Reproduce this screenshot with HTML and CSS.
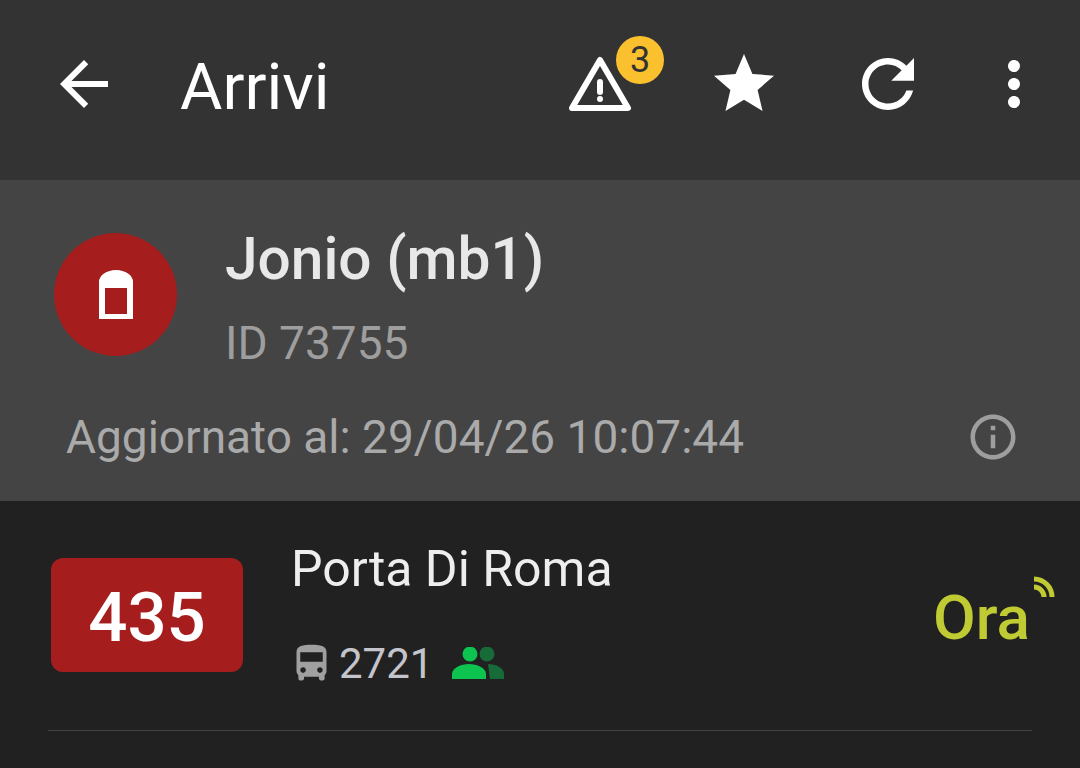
FILE: index.html
```html
<!DOCTYPE html>
<html lang="it">
<head>
<meta charset="UTF-8">
<meta name="viewport" content="width=device-width, initial-scale=1.0">
<title>Arrivi</title>
<link rel="stylesheet" href="styles.css">
</head>
<body>

<div class="toolbar">
  <div class="back-btn">
    <svg width="72" height="72" viewBox="0 0 24 24" fill="#fff"><path d="M20 11H7.83l5.59-5.59L12 4l-8 8 8 8 1.41-1.41L7.83 13H20v-2z"/></svg>
  </div>
  <div class="title">Arrivi</div>
  <div class="actions">
    <div class="action warn">
      <svg width="72" height="72" viewBox="0 0 72 72"><path d="M36 12L64 60H8Z" fill="none" stroke="#fff" stroke-width="6" stroke-linejoin="round"/><path d="M36 34V44" stroke="#fff" stroke-width="6" stroke-linecap="round"/><circle cx="36" cy="51" r="3" fill="#fff"/></svg>
      <span class="badge">3</span>
    </div>
    <div class="action">
      <svg width="72" height="72" viewBox="0 0 24 24" fill="#fff"><path d="M12 17.27L18.18 21l-1.64-7.03L22 9.24l-7.19-.61L12 2 9.19 8.63 2 9.24l5.46 4.73L5.82 21z"/></svg>
    </div>
    <div class="action">
      <svg width="78" height="78" viewBox="0 0 24 24" fill="#fff"><path d="M17.65 6.35C16.2 4.9 14.21 4 12 4c-4.42 0-7.99 3.58-7.99 8s3.57 8 7.99 8c3.73 0 6.84-2.55 7.73-6h-2.08c-.82 2.33-3.04 4-5.65 4-3.31 0-6-2.69-6-6s2.69-6 6-6c1.66 0 3.14.69 4.22 1.78L13 11h7V4l-2.35 2.35z"/></svg>
    </div>
    <div class="action more">
      <svg width="72" height="72" viewBox="0 0 24 24" fill="#fff"><path d="M12 8c1.1 0 2-.9 2-2s-.9-2-2-2-2 .9-2 2 .9 2 2 2zm0 2c-1.1 0-2 .9-2 2s.9 2 2 2 2-.9 2-2-.9-2-2-2zm0 6c-1.1 0-2 .9-2 2s.9 2 2 2 2-.9 2-2-.9-2-2-2z"/></svg>
    </div>
  </div>
</div>

<div class="stop-header">
  <div class="stop-top">
    <div class="stop-circle">
      <svg width="34" height="50" viewBox="0 0 34 50" fill="#fff"><path fill-rule="evenodd" d="M0 12A17 12 0 0 1 34 12V49H0ZM6 18v26h22V18z"/></svg>
    </div>
    <div class="stop-text">
      <div class="stop-name">Jonio (mb1)</div>
      <div class="stop-id">ID 73755</div>
    </div>
  </div>
  <div class="stop-updated">
    <span>Aggiornato al: 29/04/26 10:07:44</span>
    <svg width="54" height="54" viewBox="0 0 24 24" fill="#9e9e9e"><path d="M11 7h2v2h-2zm0 4h2v6h-2zm1-9C6.48 2 2 6.48 2 12s4.48 10 10 10 10-4.48 10-10S17.52 2 12 2zm0 18c-4.41 0-8-3.59-8-8s3.59-8 8-8 8 3.59 8 8-3.59 8-8 8z"/></svg>
  </div>
</div>

<div class="arrivals">
  <div class="arrival">
    <div class="route">435</div>
    <div class="arrival-info">
      <div class="destination">Porta Di Roma</div>
      <div class="vehicle">
        <svg width="45" height="45" viewBox="0 0 24 24" fill="#a0a0a0"><path d="M4 16c0 .88.39 1.67 1 2.22V20c0 .55.45 1 1 1h1c.55 0 1-.45 1-1v-1h8v1c0 .55.45 1 1 1h1c.55 0 1-.45 1-1v-1.78c.61-.55 1-1.34 1-2.22V6c0-3.5-3.58-4-8-4s-8 .5-8 4v10zm3.5 1c-.83 0-1.5-.67-1.5-1.5S6.67 14 7.5 14s1.5.67 1.5 1.5S8.33 17 7.5 17zm9 0c-.83 0-1.5-.67-1.5-1.5s.67-1.5 1.5-1.5 1.5.67 1.5 1.5-.67 1.5-1.5 1.5zm1.5-6H6V6h12v5z"/></svg>
        <span class="vehicle-id">2721</span>
        <svg class="crowd" width="52" height="32" viewBox="0 0 52 32"><circle cx="35" cy="7" r="7.5" fill="#176b38"/><path d="M36 17c8 0 16 4 16 10v5H38z" fill="#176b38"/><circle cx="18" cy="7" r="7.5" fill="#0cc44f"/><path d="M0 32v-5c0-6 9-10 17-10s17 4 17 10v5z" fill="#0cc44f"/></svg>
      </div>
    </div>
    <div class="eta">
      Ora
      <svg class="live" width="24" height="24" viewBox="0 0 24 24" fill="none" stroke="#c0ca33" stroke-width="5"><path d="M2 3A18 18 0 0 1 20 21"/><path d="M2 11A10 10 0 0 1 12 21"/></svg>
    </div>
  </div>
</div>

</body>
</html>
```

FILE: styles.css
```css
body {
  margin: 0;
  background-color: #212121;
  font-family: Roboto, "Noto Sans", sans-serif;
  overflow: hidden;
}

/* top bar */
.toolbar {
  display: flex;
  align-items: center;
  height: 168px;
  padding: 0 12px 12px 48px;
  background-color: #333;
}

.back-btn {
  display: flex;
  width: 72px;
}

.title {
  margin: 6px 0 0 60px;
  color: #fff;
  font-size: 65px;
}

.actions {
  display: flex;
  margin-left: auto;
}

.action {
  position: relative;
  display: flex;
  align-items: center;
  justify-content: center;
  width: 144px;
  height: 78px;
}

.action.more {
  width: 108px;
}

.badge {
  position: absolute;
  top: -9px;
  left: 88px;
  width: 48px;
  height: 48px;
  border-radius: 50%;
  background-color: #fbc02d;
  color: #333;
  font-size: 36px;
  line-height: 48px;
  text-align: center;
}

/* stop info */
.stop-header {
  height: 321px;
  background-color: #444;
}

.stop-top {
  display: flex;
  padding: 53px 0 0 54px;
}

.stop-circle {
  display: flex;
  align-items: center;
  justify-content: center;
  width: 123px;
  height: 123px;
  border-radius: 50%;
  background-color: #a51d1d;
}

.stop-text {
  margin-left: 48px;
}

.stop-name {
  color: #e8e8e8;
  font-size: 58.6px;
  font-weight: 500;
  line-height: 52px;
}

.stop-id {
  margin-top: 36px;
  color: #9e9e9e;
  font-size: 46px;
  line-height: 45px;
}

.stop-updated {
  display: flex;
  align-items: center;
  justify-content: space-between;
  margin-top: 44px;
  padding: 0 60px 0 66px;
  color: #aaa;
  font-size: 46px;
}

/* arrivals */
.arrival {
  display: flex;
  align-items: center;
  height: 229px;
  margin: 0 48px;
  border-bottom: 1px solid #444;
}

.route {
  width: 192px;
  height: 114px;
  margin: 0 0 1px 3px;
  border-radius: 12px;
  background-color: #a51d1d;
  color: #fff;
  font-size: 69px;
  font-weight: 500;
  line-height: 120px;
  text-align: center;
}

.arrival-info {
  margin: 0 0 5px 48px;
}

.destination {
  color: #eee;
  font-size: 50px;
  line-height: 56px;
}

.vehicle {
  display: flex;
  align-items: center;
  margin: 44px 0 0 -2px;
}

.vehicle svg {
  display: block;
}

.vehicle-id {
  margin-left: 5px;
  color: #c4c4cc;
  font-size: 42px;
  line-height: 45px;
}

.vehicle .crowd {
  margin-left: 19px;
}

.eta {
  position: relative;
  margin: 4px 2px 0 auto;
  color: #c0ca33;
  font-size: 62px;
  font-weight: 500;
}

.live {
  position: absolute;
  top: -5px;
  right: -26px;
}
```
